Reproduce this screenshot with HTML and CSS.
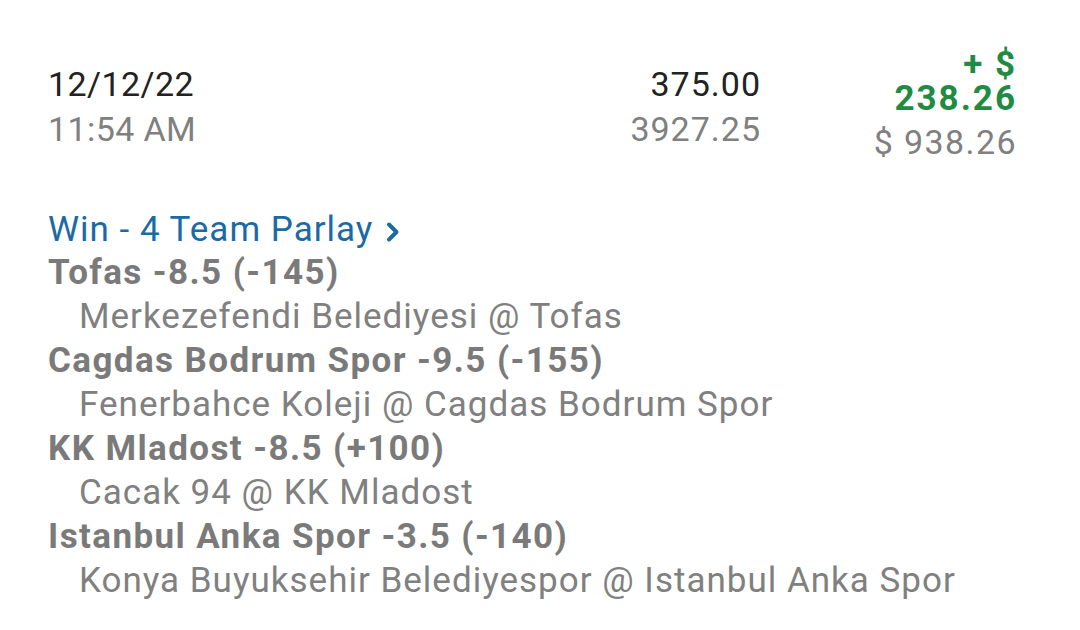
FILE: index.html
```html
<!DOCTYPE html>
<html>
<head>
<meta charset="utf-8">
<link rel="stylesheet" href="styles.css">
</head>
<body>
<div class="card">
  <div class="header">
    <div class="col-date">
      <div class="line dark">12/12/22</div>
      <div class="line gray">11:54 AM</div>
    </div>
    <div class="col-amt">
      <div class="line dark">375.00</div>
      <div class="line gray">3927.25</div>
    </div>
    <div class="col-win">
      <div class="win">+ $</div>
      <div class="win">238.26</div>
      <div class="line gray total">$ 938.26</div>
    </div>
  </div>
  <div class="bet">
    <a class="title">Win - 4 Team Parlay <svg class="chev" viewBox="0 0 16 22" width="16" height="22"><path d="M4 3.5 L11.5 11 L4 18.5" fill="none" stroke="currentColor" stroke-width="4" stroke-linecap="round" stroke-linejoin="round"/></svg></a>
    <div class="leg">Tofas -8.5 (-145)</div>
    <div class="game">Merkezefendi Belediyesi @ Tofas</div>
    <div class="leg">Cagdas Bodrum Spor -9.5 (-155)</div>
    <div class="game">Fenerbahce Koleji @ Cagdas Bodrum Spor</div>
    <div class="leg">KK Mladost -8.5 (+100)</div>
    <div class="game">Cacak 94 @ KK Mladost</div>
    <div class="leg">Istanbul Anka Spor -3.5 (-140)</div>
    <div class="game">Konya Buyuksehir Belediyespor @ Istanbul Anka Spor</div>
  </div>
</div>
</body>
</html>
```
FILE: styles.css
```css
html, body {
  margin: 0;
  padding: 0;
  background: #ffffff;
}
body {
  font-family: Roboto, "Noto Sans", sans-serif;
  font-size: 34px;
  width: 1080px;
  height: 630px;
  overflow: hidden;
}
.card {
  padding: 48px 63px 0 48px;
}
.header {
  display: flex;
  align-items: center;
}
.col-date {
  flex: 1;
  letter-spacing: 0.4px;
}
.col-amt {
  text-align: right;
  letter-spacing: 1px;
}
.col-win {
  width: 256px;
  text-align: right;
}
.line {
  line-height: 45px;
}
.dark { color: #222222; }
.gray { color: #808080; }
.win {
  color: #1f8b43;
  font-weight: 700;
  font-size: 35px;
  letter-spacing: 2px;
  line-height: 34px;
}
.total {
  margin-top: 4px;
  letter-spacing: 1.4px;
}
.bet {
  margin-top: 43px;
  font-size: 35px;
}
.title {
  display: block;
  color: #1a6aa6;
  line-height: 43px;
  letter-spacing: 1px;
}
.chev {
  vertical-align: -2px;
  margin-left: 2px;
}
.leg {
  color: #7a7a7a;
  font-weight: 700;
  line-height: 43px;
  letter-spacing: 1.4px;
}
.game {
  color: #808080;
  line-height: 45px;
  padding-left: 31px;
  letter-spacing: 1px;
}
```
